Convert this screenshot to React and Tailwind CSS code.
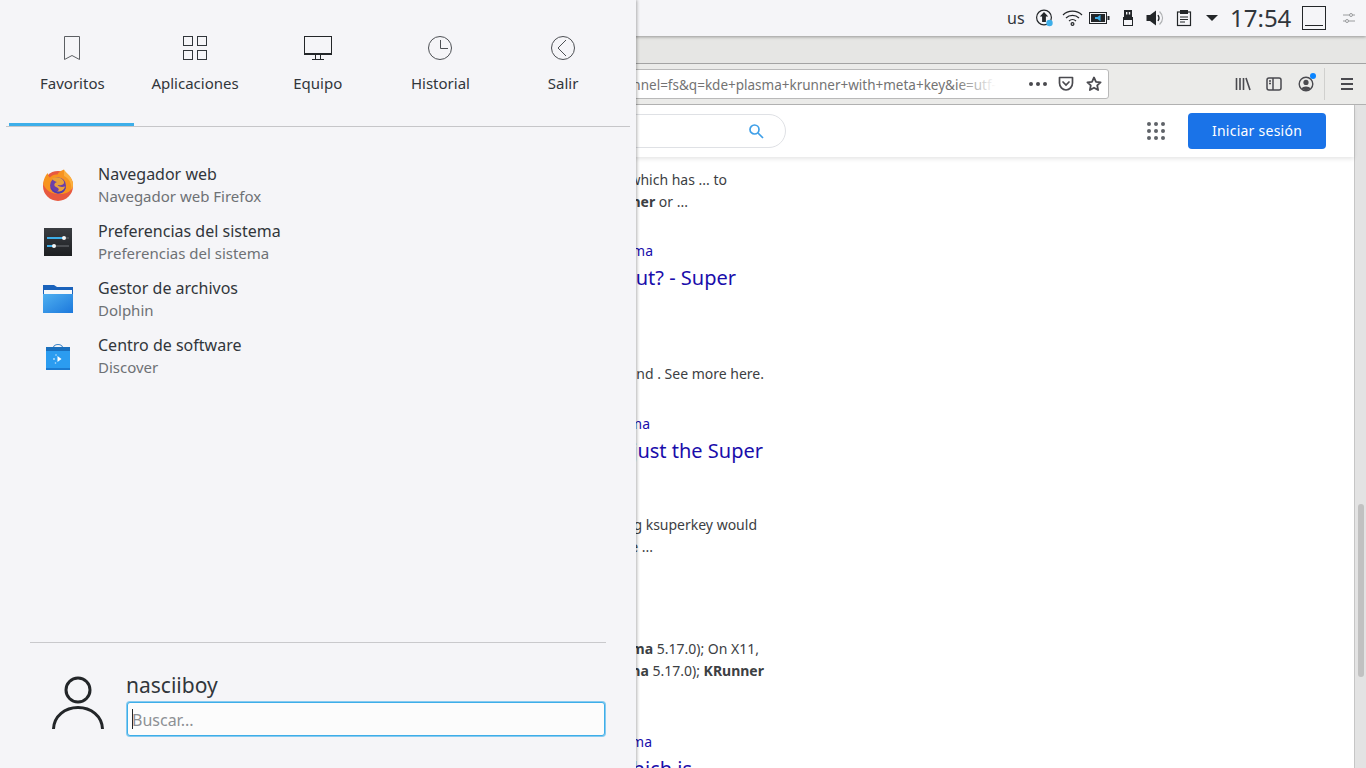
const NOTO = "font-['Noto_Sans',sans-serif]";

function Line({ right, title, link, children, mt }) {
  const size = title ? "h-[28px] text-[20px] leading-[28px] text-[#1a0dab]" : link ? "h-[22px] text-[14px] leading-[22px] text-[#1a0dab]" : "h-[22px] text-[14px] leading-[22px] text-[#3c4043]";
  return (
    <div className={`flex justify-end whitespace-nowrap ${size}`} style={{ width: right, marginTop: mt }}>
      <span>{children}</span>
    </div>
  );
}

function TopPanel() {
  return (
    <div className="h-[36px] bg-[#f5f5f8] flex items-center shrink-0 shadow-[0_1px_3px_rgba(0,0,0,0.35)] relative z-10">
      <span className="ml-[1007px] w-[29px] text-[16px] text-[#31363b]">us</span>
      <svg width="18" height="18" viewBox="0 0 18 18" className="shrink-0" fill="none">
        <circle cx="8" cy="8.5" r="7.4" stroke="#232629" strokeWidth="1.2" />
        <path d="M8 3 L12.2 7.5 H9.9 V13 H6.1 V7.5 H3.8 Z" fill="#232629" />
        <circle cx="13.5" cy="14" r="3.2" fill="#3daee9" />
      </svg>
      <svg width="22" height="18" viewBox="0 0 22 18" className="ml-[8px] shrink-0" fill="none" stroke="#232629" strokeWidth="1.2">
        <path d="M1 6 C6 0.8 15 0.8 20 6" />
        <path d="M4 9 C7.5 5.5 13.5 5.5 17 9" />
        <path d="M7 12 C9 10.2 12 10.2 14 12" />
        <circle cx="10.5" cy="15" r="1.4" />
      </svg>
      <svg width="22" height="14" viewBox="0 0 22 14" className="ml-[5px] shrink-0">
        <rect x="0.5" y="1.5" width="17" height="11" fill="#f5f5f8" stroke="#232629" />
        <rect x="2" y="3" width="14" height="8" fill="#232629" />
        <rect x="18.5" y="5" width="2" height="4" fill="#232629" />
        <path d="M11.5 3.8 V10.2 L8.5 8 H6 V6 H8.5 Z" fill="#3daee9" />
      </svg>
      <svg width="12" height="18" viewBox="0 0 12 18" className="ml-[11px] shrink-0">
        <rect x="2" y="1" width="8" height="7" fill="#232629" />
        <rect x="4" y="3" width="1.4" height="2.5" fill="#f5f5f8" />
        <rect x="6.8" y="3" width="1.4" height="2.5" fill="#f5f5f8" />
        <rect x="1" y="8" width="10" height="9" fill="#232629" />
        <rect x="2" y="11" width="8" height="5" fill="#f5f5f8" />
      </svg>
      <svg width="18" height="18" viewBox="0 0 18 18" className="ml-[12px] shrink-0" fill="none">
        <path d="M0.5 6 H4 L10 1.5 V16.5 L4 12 H0.5 Z" fill="#232629" />
        <path d="M12 6 C13.2 7.8 13.2 10.2 12 12" stroke="#232629" strokeWidth="1.3" />
        <path d="M13.5 2.5 C17.5 6.5 17.5 11.5 13.5 15.5" stroke="#b0b2b4" strokeWidth="1.3" />
      </svg>
      <svg width="16" height="18" viewBox="0 0 16 18" className="ml-[12px] shrink-0" fill="none">
        <rect x="1.5" y="3" width="13" height="13.5" stroke="#232629" strokeWidth="1.2" />
        <rect x="4" y="1" width="8" height="4" fill="#232629" />
        <path d="M4 8 H12 M4 10.5 H12 M4 13 H9" stroke="#232629" />
      </svg>
      <div className="ml-[14px] w-0 h-0 border-l-[6px] border-r-[6px] border-t-[6px] border-l-transparent border-r-transparent border-t-[#232629] shrink-0" />
      <span className="ml-[12px] text-[24px] leading-none text-[#31363b] w-[72px]">17:54</span>
      <div className="w-[24px] h-[24px] border border-[#232629] flex items-end justify-center pb-[3px] shrink-0">
        <div className="w-[18px] h-px bg-[#232629]" />
      </div>
      <svg width="14" height="14" viewBox="0 0 14 14" className="ml-[16px] shrink-0" fill="none" stroke="#9a9c9e">
        <path d="M1 4 H13 M1 10 H13" />
        <circle cx="9" cy="4" r="1.5" fill="#f5f5f8" />
        <circle cx="5" cy="10" r="1.5" fill="#f5f5f8" />
      </svg>
    </div>
  );
}

function BrowserChrome() {
  return (
    <>
      <div className="h-[28px] bg-[#e6e6e4] border-b border-[#a3a3a3] shrink-0" />
      <div className="h-[41px] bg-[#ebebe9] border-b border-[#b1b1b1] flex items-center shrink-0">
        <div className="ml-[300px] w-[809px] h-[30px] bg-white border border-[#b9b9b9] rounded-[3px] flex items-center shrink-0">
          <div className="relative w-[695px] pt-[2px] flex justify-end overflow-hidden whitespace-nowrap text-[13.5px] text-[#737373]">
            <span>channel=fs&amp;q=kde+plasma+krunner+with+meta+key&amp;ie=utf-</span>
            <div className="absolute right-0 top-0 bottom-0 w-[40px] bg-gradient-to-r from-transparent to-white" />
          </div>
          <div className="ml-[33px] flex gap-[3px] shrink-0">
            <div className="w-[4px] h-[4px] rounded-full bg-[#4a4a4f]" />
            <div className="w-[4px] h-[4px] rounded-full bg-[#4a4a4f]" />
            <div className="w-[4px] h-[4px] rounded-full bg-[#4a4a4f]" />
          </div>
          <svg width="16" height="16" viewBox="0 0 16 16" className="ml-[11px] shrink-0" fill="none" stroke="#4a4a4f" strokeWidth="1.7">
            <path d="M1.5 1.5 H14.5 V7 A6.5 7 0 0 1 1.5 7 Z" strokeLinejoin="round" />
            <path d="M5 6 L8 9 L11 6" strokeLinecap="round" />
          </svg>
          <svg width="16" height="16" viewBox="0 0 16 16" className="ml-[12px] shrink-0" fill="none" stroke="#4a4a4f" strokeWidth="1.8">
            <path d="M8 1.5 L10 5.8 L14.6 6.3 L11.2 9.4 L12.1 14 L8 11.7 L3.9 14 L4.8 9.4 L1.4 6.3 L6 5.8 Z" strokeLinejoin="round" />
          </svg>
        </div>
        <svg width="16" height="16" viewBox="0 0 16 16" className="ml-[126px] shrink-0" fill="none" stroke="#4a4a4f" strokeWidth="1.6">
          <path d="M1.5 2 V14 M5 2 V14 M8.5 2 V14 M11 2 L15 14" />
        </svg>
        <svg width="16" height="14" viewBox="0 0 16 14" className="ml-[15px] shrink-0" fill="none" stroke="#4a4a4f" strokeWidth="1.5">
          <rect x="1" y="1" width="14" height="12" rx="2" />
          <path d="M7 1 V13" />
          <path d="M3 4 H5 M3 6.5 H5" />
        </svg>
        <div className="relative ml-[16px] shrink-0 w-[16px] h-[16px]">
          <svg width="16" height="16" viewBox="0 0 16 16" fill="none">
            <circle cx="8" cy="8" r="6.8" stroke="#4a4a4f" strokeWidth="1.4" />
            <circle cx="8" cy="6.4" r="2.6" fill="#4a4a4f" />
            <path d="M3.5 12.5 C4.5 9.8 11.5 9.8 12.5 12.5 C10 14.6 6 14.6 3.5 12.5 Z" fill="#4a4a4f" />
          </svg>
          <div className="absolute -top-[3px] -right-[2px] w-[6px] h-[6px] rounded-full bg-[#0a84ff]" />
        </div>
        <div className="ml-[10px] w-px h-[32px] bg-[#d0d0ce] shrink-0" />
        <div className="ml-[16px] w-[12px] flex flex-col gap-[3px] shrink-0">
          <div className="h-[2px] bg-[#4a4a4f]" />
          <div className="h-[2px] bg-[#4a4a4f]" />
          <div className="h-[2px] bg-[#4a4a4f]" />
        </div>
      </div>
    </>
  );
}

function WebPage() {
  const bold = "font-bold";
  return (
    <div className="flex-1 min-h-0 flex bg-white overflow-hidden">
      <div className="flex-1 min-w-0 flex flex-col">
        <div className="h-[52px] shrink-0 flex items-center shadow-[0_2px_4px_rgba(0,0,0,0.1)] relative">
          <div className="ml-[300px] w-[486px] h-[34px] border border-[#dfe1e5] rounded-full flex items-center justify-end pr-[21px] shrink-0">
            <svg width="16" height="16" viewBox="0 0 16 16" fill="none" stroke="#3f9fe8" strokeWidth="1.7">
              <circle cx="6.5" cy="6.5" r="4.5" />
              <path d="M10 10 L15 15" />
            </svg>
          </div>
          <div className="ml-[361px] grid grid-cols-3 gap-[3px] shrink-0">
            {[0, 1, 2, 3, 4, 5, 6, 7, 8].map((i) => (
              <div key={i} className="w-[4px] h-[4px] rounded-full bg-[#5f6368]" />
            ))}
          </div>
          <div className="ml-[23px] w-[138px] h-[36px] pb-px bg-[#1a73e8] rounded-[4px] flex items-center justify-center text-white text-[14px] tracking-[0.25px] shrink-0">
            Iniciar sesión
          </div>
        </div>
        <Line right={727} mt={12}>which has ... to</Line>
        <Line right={688} mt={0}><b className={bold}>KRunner</b> or ...</Line>
        <Line right={653} mt={27} link>plasma</Line>
        <Line right={736} mt={2} title>shortcut? - Super</Line>
        <Line right={764} mt={71}>and . See more here.</Line>
        <Line right={650} mt={28} link>plasma</Line>
        <Line right={763} mt={2} title>just the Super</Line>
        <Line right={757} mt={49}>using ksuperkey would</Line>
        <Line right={653} mt={0}>e ...</Line>
        <Line right={759} mt={80}><b className={bold}>plasma</b> 5.17.0); On X11,</Line>
        <Line right={764} mt={0}><b className={bold}>plasma</b> 5.17.0); <b className={bold}>KRunner</b></Line>
        <Line right={652} mt={49} link>plasma</Line>
        <Line right={692} mt={2} title>which is</Line>
      </div>
      <div className="w-[12px] shrink-0 bg-[#e3e3e3] border-l border-[#c6c6c6] flex justify-center pt-[399px]">
        <div className="w-[6px] h-[173px] rounded-full bg-[#c1c1c1]" />
      </div>
    </div>
  );
}

function FirefoxIcon() {
  return (
    <svg width="32" height="32" viewBox="0 0 32 32">
      <circle cx="16" cy="17" r="15" fill="#e8593f" />
      <path d="M1.2 15 C1.5 10 3.5 6 6 4 C6 6 6.5 7.5 8 8.5 C10 6 13 5 15.5 5.5 C16 3.5 19 1.5 22 0.5 C22 3 25 4 27 7 C30 10 31.5 13 31 17 C29 23 24 25 18 25 C10 25 4 22 1.2 15 Z" fill="#f7941f" />
      <path d="M22 0.5 C23 3 27 5 29 9 C31.5 13 31.5 18 29.5 21 C30 15 27 9 22 7 Z" fill="#fbb040" />
      <circle cx="16" cy="16.5" r="8" fill="#6b3fa8" />
      <path d="M10 9.5 C14 7.5 21 8.5 22 13 C22.5 16 18.5 16.5 15.5 16 C17 18 20 18.5 23 17.5 C22 22 17 24 13 23.5 C17 22 18 20 15 18.5 C11 17 12 14 15 13 C13 12 11 12 10 9.5 Z" fill="#e9a13b" />
      <path d="M8.5 18 C10 22 13 24.5 17 24.5 C21 24.5 24 21 24 17 C23 20.5 20 22.5 16 22.5 C13 22.5 11 21 8.5 18 Z" fill="#4a3bb0" />
    </svg>
  );
}

function SettingsIcon() {
  return (
    <svg width="28" height="28" viewBox="0 0 28 28">
      <defs>
        <linearGradient id="sg" x1="0" y1="0" x2="0" y2="1">
          <stop offset="0" stopColor="#3a3d42" />
          <stop offset="1" stopColor="#1d1f22" />
        </linearGradient>
      </defs>
      <rect width="28" height="28" fill="url(#sg)" />
      <rect x="3" y="9" width="22" height="2" fill="#4b4e52" />
      <rect x="3" y="9" width="17" height="2" fill="#3daee9" />
      <circle cx="20" cy="10" r="2" fill="#f5f5f5" />
      <rect x="3" y="17" width="22" height="2" fill="#4b4e52" />
      <rect x="3" y="17" width="7" height="2" fill="#3daee9" />
      <circle cx="10" cy="18" r="2" fill="#f5f5f5" />
    </svg>
  );
}

function FolderIcon() {
  return (
    <svg width="30" height="28" viewBox="0 0 30 28">
      <defs>
        <linearGradient id="fg" x1="0" y1="0" x2="1" y2="1">
          <stop offset="0" stopColor="#4fb0f0" />
          <stop offset="1" stopColor="#1c78dc" />
        </linearGradient>
      </defs>
      <path d="M0 0 H11 L14 2 H30 V28 H0 Z" fill="#1a62bb" />
      <rect x="1" y="5" width="28" height="4" fill="#f6f8fa" />
      <path d="M0 9 H30 V28 H0 Z" fill="url(#fg)" />
    </svg>
  );
}

function DiscoverIcon() {
  return (
    <svg width="26" height="28" viewBox="0 0 26 28">
      <path d="M8 7 C8 1 18 1 18 7" fill="none" stroke="#3f87c8" strokeWidth="1.2" />
      <rect x="1" y="5" width="24" height="23" rx="1" fill="#2b9cf0" />
      <rect x="1" y="5" width="24" height="4" fill="#1a6fbd" />
      <rect x="1" y="26" width="24" height="2" fill="#1b7ad0" />
      <path d="M12.5 14 L16.5 17 L12.5 20 Z" fill="#fff" />
      <circle cx="9" cy="17" r="0.9" fill="#bfe3fb" />
      <circle cx="11" cy="13" r="0.8" fill="#bfe3fb" />
      <circle cx="10.5" cy="21" r="0.8" fill="#bfe3fb" />
    </svg>
  );
}

const tabs = [
  {
    label: "Favoritos",
    icon: (
      <svg width="24" height="24" viewBox="0 0 24 24" fill="none" stroke="#5c5f63">
        <path d="M4.5 0.5 H19.5 V23.5 L12 19.5 L4.5 23.5 Z" />
      </svg>
    ),
  },
  {
    label: "Aplicaciones",
    icon: (
      <svg width="24" height="24" viewBox="0 0 24 24" fill="none" stroke="#31363b">
        <rect x="0.5" y="0.5" width="9" height="9" />
        <rect x="14.5" y="0.5" width="9" height="9" />
        <rect x="0.5" y="14.5" width="9" height="9" />
        <rect x="14.5" y="14.5" width="9" height="9" />
      </svg>
    ),
  },
  {
    label: "Equipo",
    icon: (
      <svg width="28" height="24" viewBox="0 0 28 24" fill="none">
        <rect x="0.5" y="0.5" width="27" height="18" stroke="#232629" />
        <rect x="0" y="17" width="28" height="2" fill="#232629" />
        <path d="M11.5 19 V23 M16.5 19 V23 M8 23.5 H20" stroke="#232629" />
      </svg>
    ),
  },
  {
    label: "Historial",
    icon: (
      <svg width="24" height="24" viewBox="0 0 24 24" fill="none" stroke="#4d5054">
        <circle cx="12" cy="12" r="11.5" />
        <path d="M12.5 4 V12.5 H20" />
      </svg>
    ),
  },
  {
    label: "Salir",
    icon: (
      <svg width="24" height="24" viewBox="0 0 24 24" fill="none" stroke="#4d5054">
        <circle cx="12" cy="12" r="11.5" />
        <path d="M15 4 L7 12 L15 20" />
      </svg>
    ),
  },
];

const apps = [
  { t: "Navegador web", s: "Navegador web Firefox", icon: <FirefoxIcon /> },
  { t: "Preferencias del sistema", s: "Preferencias del sistema", icon: <SettingsIcon /> },
  { t: "Gestor de archivos", s: "Dolphin", icon: <FolderIcon /> },
  { t: "Centro de software", s: "Discover", icon: <DiscoverIcon /> },
];

function Menu() {
  return (
    <div className="absolute left-0 top-0 bottom-0 w-[636px] z-20 bg-[#f5f5f8] flex flex-col shadow-[1px_0_3px_rgba(0,0,0,0.3)]">
      <div className="ml-[11px] w-[613.5px] grid grid-cols-5 pt-[36px]">
        {tabs.map((t) => (
          <div key={t.label} className="flex flex-col items-center">
            <div className="h-[24px] flex items-center justify-center">{t.icon}</div>
            <div className="mt-[12px] text-[15px] leading-[22px] text-[#31363b]">{t.label}</div>
          </div>
        ))}
      </div>
      <div className="mt-[29px] ml-[9px] w-[125px] h-[3px] bg-[#3daee9]" />
      <div className="ml-[6px] w-[624px] h-px bg-[#c6c6c9]" />
      <div className="mt-[29px] flex flex-col">
        {apps.map((a) => (
          <div key={a.t} className="h-[57px] flex items-center">
            <div className="ml-[40px] w-[36px] flex items-center justify-center">{a.icon}</div>
            <div className="ml-[22px]">
              <div className="mt-px text-[16px] leading-[23px] text-[#31363b]">{a.t}</div>
              <div className="-mt-px mb-px text-[15px] leading-[22px] text-[#6e7175]">{a.s}</div>
            </div>
          </div>
        ))}
      </div>
      <div className="mt-auto ml-[30px] w-[576px] h-px bg-[#c9c9cc]" />
      <div className="h-[125px] flex">
        <div className="ml-[51px] mt-[33px] shrink-0">
          <svg width="54" height="54" viewBox="0 0 54 54" fill="none" stroke="#232629" strokeWidth="3">
            <circle cx="27" cy="14" r="12" />
            <path d="M2.5 53 C3 40 14 31.5 27 31.5 C40 31.5 51 40 51.5 53" />
          </svg>
        </div>
        <div className="ml-[22px] mt-[26px] w-[478px]">
          <div className="-ml-px text-[21px] leading-[33px] text-[#31363b]">nasciiboy</div>
          <div className="h-[34px] bg-[#fcfcfc] border border-[#3daee9] rounded-[3px] flex items-center pl-[4px] shadow-[0_0_0_1px_rgba(61,174,233,0.6)]">
            <div className="w-px h-[20px] bg-[#232629]" />
            <span className="-ml-px pt-px text-[16px] text-[#8d9094]">Buscar...</span>
          </div>
        </div>
      </div>
    </div>
  );
}

export default function App() {
  return (
    <div className={`relative w-[1366px] h-[768px] overflow-hidden flex flex-col ${NOTO}`}>
      <TopPanel />
      <BrowserChrome />
      <WebPage />
      <Menu />
    </div>
  );
}
